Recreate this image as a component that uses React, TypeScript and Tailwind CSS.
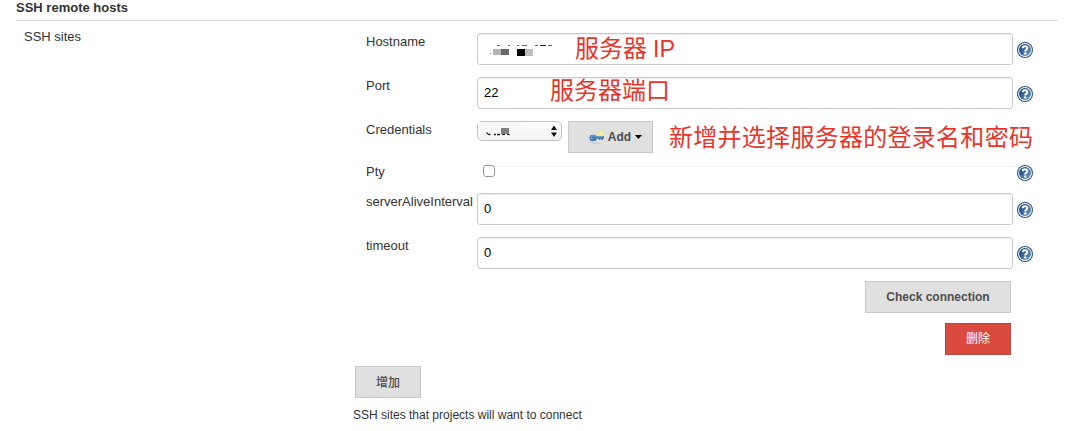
import type { ReactNode } from "react";

function HelpIcon() {
  return (
    <svg className="block size-4 shrink-0" viewBox="0 0 16 16" aria-label="Help">
      <defs>
        <linearGradient id="help-fill" x1="0" y1="0" x2="1" y2="1">
          <stop offset="0.2" stopColor="#1f4a84" />
          <stop offset="1" stopColor="#7ba3d0" />
        </linearGradient>
      </defs>
      <circle cx="8" cy="8" r="8" fill="#2c5685" />
      <circle cx="8" cy="8" r="6.9" fill="#fff" />
      <circle cx="8" cy="8" r="6" fill="url(#help-fill)" />
      <path d="M5.6 6.2C5.6 4.7 6.7 4.2 8 4.2s2.3.7 2.3 1.9c0 1.5-2.1 1.6-2.1 3.4" fill="none" stroke="#fff" strokeWidth="2" />
      <rect x="7.1" y="10.5" width="2.2" height="2" fill="#fff" />
    </svg>
  );
}

function KeyIcon() {
  return (
    <svg className="block h-4 w-4" viewBox="0 0 16 16" aria-hidden="true">
      <ellipse cx="7" cy="14.4" rx="5" ry="0.8" fill="#cbcbcb" />
      <circle cx="12" cy="4.4" r="2.9" fill="#efe98f" />
      <circle cx="12" cy="4.4" r="1.4" fill="#fbf6a8" />
      <path d="M6 7.2h9v2.4h-1v1.3h-1.6V9.7h-1v1.1H9.8V9.8H6z" fill="#3d70a5" />
      <ellipse cx="4.2" cy="9" rx="3.7" ry="3.2" fill="#4179b3" />
      <path d="M1.8 7.8Q4 6 6.5 7.4M7 7.8h7" stroke="#77a7d4" fill="none" />
      <ellipse cx="2.6" cy="9.4" rx="0.9" ry="0.7" fill="#a9c5e0" />
    </svg>
  );
}

function MaskedHost() {
  return (
    <svg className="absolute left-2 top-2 h-4 w-20" viewBox="0 0 80 16" shapeRendering="crispEdges" aria-hidden="true">
      <g fill="#666">
        <rect x="11" y="3" width="3" height="1" />
        <rect x="22" y="3" width="2" height="1" />
        <rect x="31" y="3" width="2" height="1" />
        <rect x="36" y="3" width="5" height="1" />
        <rect x="49" y="3" width="3" height="1" />
        <rect x="54" y="3" width="6" height="1" fill="#222" />
        <rect x="62" y="3" width="4" height="1" />
      </g>
      <rect x="4" y="11" width="1" height="1" fill="#777" />
      <rect x="7" y="7" width="8" height="6" fill="#b3b3b3" />
      <rect x="15" y="7" width="8" height="6" fill="#686868" />
      <rect x="31" y="7" width="8" height="7" fill="#000" />
      <rect x="39" y="7" width="8" height="7" fill="#bebebe" />
    </svg>
  );
}

function Note({ children, className }: { children: ReactNode; className: string }) {
  return (
    <span
      className={`absolute whitespace-nowrap font-['Noto_Sans_CJK_SC',sans-serif] leading-8 text-[#e8352b] ${className}`}
    >
      {children}
    </span>
  );
}

function TextField({ label, value, children }: { label: string; value?: string; children?: ReactNode }) {
  return (
    <div className="flex h-11 items-start">
      <div className="w-[111px] shrink-0 whitespace-nowrap pt-px leading-4">{label}</div>
      <div className="relative flex h-8 w-[536px] items-center rounded-[3px] border border-[#ccc] px-1.5 text-black shadow-[inset_0_1px_1px_rgba(0,0,0,0.08)]">
        {value}
        {children}
      </div>
      <div className="ml-1 mt-[9px]">
        <HelpIcon />
      </div>
    </div>
  );
}

const buttonClass =
  "flex h-8 items-center justify-center border border-[#c9c9c9] bg-[#e0e0e0] text-[12px] text-[#4d4d4d]";

export default function App() {
  return (
    <main className="h-[431px] w-[1067px] overflow-hidden bg-white pl-4 font-['Liberation_Sans','Noto_Sans_CJK_SC',sans-serif] text-[13px] text-[#333]">
      <h2 className="h-[21px] w-[1042px] border-b border-[#ddd] text-[13px] font-bold leading-4">SSH remote hosts</h2>
      <div className="flex pt-3">
        <div className="-mt-1 w-[334px] shrink-0 pl-2 leading-4">
          <span className="block">SSH sites</span>
        </div>
        <section className="w-[700px]">
          <div className="pl-4">
            <TextField label="Hostname">
              <MaskedHost />
              <Note className="left-[97px] top-[-3px] text-[24px]">
                服务器<span className="ml-1.5 font-['Liberation_Sans',sans-serif] text-[23.5px]">IP</span>
              </Note>
            </TextField>
            <TextField label="Port" value="22">
              <Note className="left-[72px] top-[-5px] text-[24px]">服务器端口</Note>
            </TextField>
            <div className="flex h-11 items-start">
              <div className="w-[111px] shrink-0 pt-px leading-4">Credentials</div>
              <div className="relative h-5 w-[85px] shrink-0 rounded-[5px] border border-[#c3c3c3] bg-linear-to-b from-white to-[#f3f3f3]">
                <svg className="block h-[18px] w-[83px]" viewBox="0 0 83 18" aria-hidden="true">
                  <path d="M0 0h43v5H16v1H0z" fill="#f8f8f8" />
                  <path d="M8.5 10.5q2 3 4 1.5M16 12.5h2m1 0h3" fill="none" stroke="#222" strokeWidth="1.3" />
                  <path d="M23 6h8v6h-8z" fill="#808080" />
                  <path d="M24 12.5h3m2 0h3" stroke="#222" />
                  <path d="M73 8l3-4.5L79 8zm0 2.5h6L76 15z" fill="#111" />
                </svg>
              </div>
              <div className={`${buttonClass} relative ml-1.5 w-[85px] shrink-0 pl-2.5 font-bold`}>
                <KeyIcon />
                <span className="ml-[3px]">Add</span>
                <svg className="ml-1 h-1 w-[7px]" viewBox="0 0 7 4" aria-hidden="true">
                  <path d="M0 0h7L3.5 4z" fill="#000" />
                </svg>
                <Note className="left-[100px] top-[-2px] text-[24px] font-normal tracking-[0.28px]">
                  新增并选择服务器的登录名和密码
                </Note>
              </div>
            </div>
            <div className="flex h-7 items-start">
              <div className="-mt-px w-[111px] shrink-0 leading-4">Pty</div>
              <div className="flex w-[540px] items-start pl-1.5">
                <input type="checkbox" className="size-3 appearance-none rounded-[3px] border border-[#999] bg-white" />
                <div className="mt-px h-px flex-1 bg-[#eee]" />
              </div>
              <HelpIcon />
            </div>
            <TextField label="serverAliveInterval" value="0" />
            <TextField label="timeout" value="0" />
          </div>
          <div className="flex w-[661px] flex-col items-end gap-2.5">
            <div className={`${buttonClass} w-[146px] font-bold`}>Check connection</div>
            <div className="flex h-8 w-[66px] items-center justify-center border border-[#b5463c] bg-[#db4a3f] text-[12px] text-white">
              删除
            </div>
          </div>
          <div className={`${buttonClass} ml-[5px] mt-[11px] w-[66px] font-['Noto_Sans_CJK_SC',sans-serif] font-medium`}>
            增加
          </div>
          <p className="ml-[3px] mt-[9px] text-[12px] leading-4">SSH sites that projects will want to connect</p>
        </section>
      </div>
    </main>
  );
}
